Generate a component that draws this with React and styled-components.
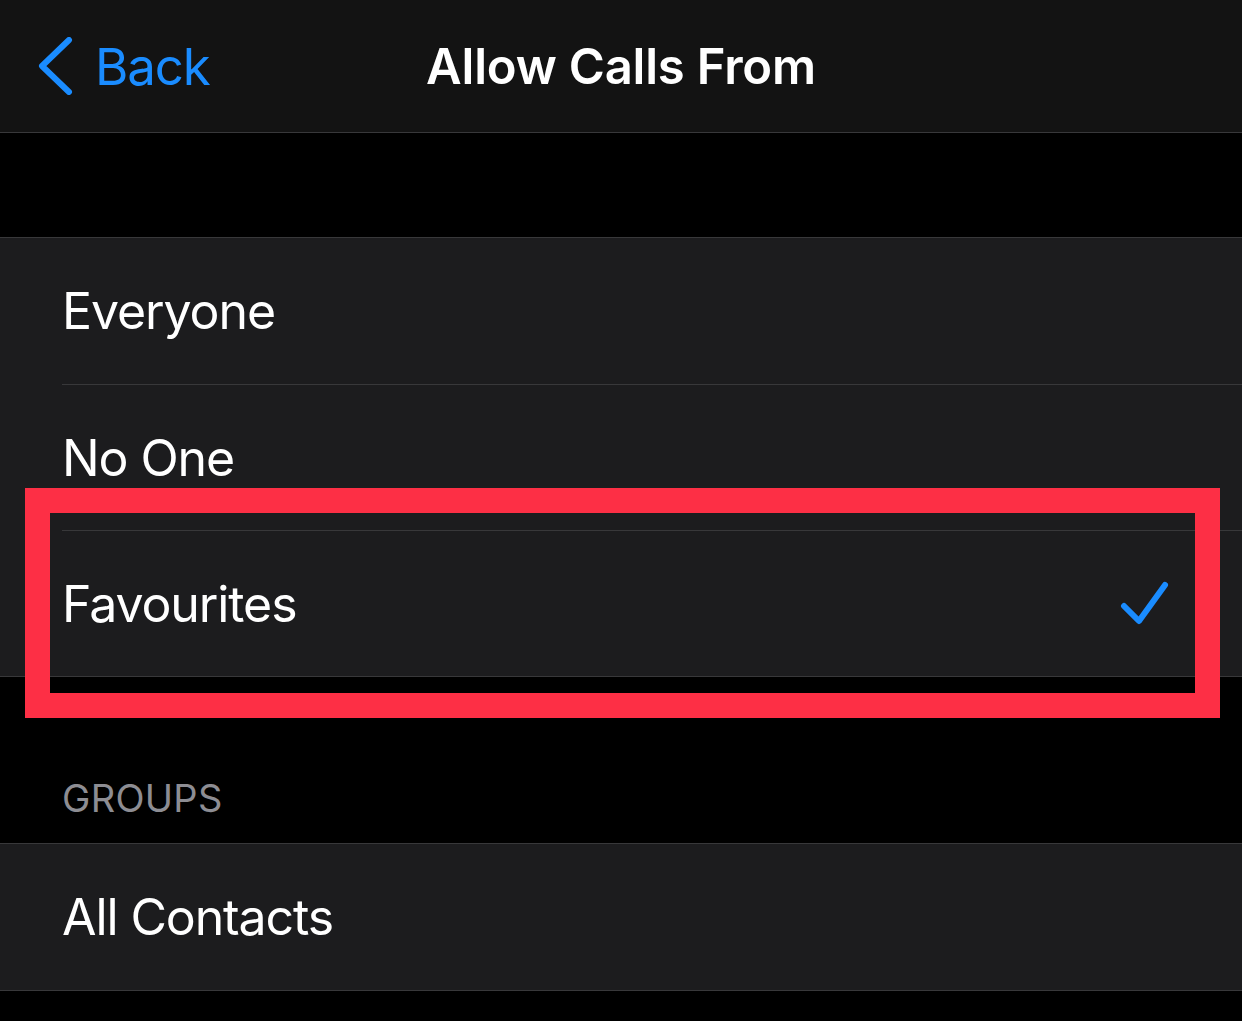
import React from "react";
import styled, { createGlobalStyle } from "styled-components";

const GlobalStyle = createGlobalStyle`
  html, body {
    margin: 0;
    padding: 0;
    background: #000;
  }
  body {
    font-family: Inter, "Noto Sans", "Liberation Sans", sans-serif;
    -webkit-font-smoothing: antialiased;
  }
`;

const Screen = styled.main`
  position: relative;
  width: 1242px;
  height: 1021px;
  background: #000;
  overflow: hidden;
`;

const NavBar = styled.header`
  position: relative;
  display: flex;
  align-items: center;
  justify-content: center;
  height: 132px;
  background: #131313;
  border-bottom: 1px solid #38383a;
`;

const BackButton = styled.div`
  position: absolute;
  left: 37px;
  top: 0;
  bottom: 0;
  display: flex;
  align-items: center;
  gap: 22px;
  color: #1a8cff;
  font-size: 51px;
  letter-spacing: -1.1px;
`;

const Title = styled.h1`
  margin: 0;
  color: #fff;
  font-size: 49px;
  font-weight: 600;
  letter-spacing: -0.2px;
`;

const Spacer = styled.div`
  height: ${props => props.size}px;
`;

const SectionHeader = styled.div`
  display: flex;
  align-items: flex-end;
  height: ${props => props.size}px;
  padding: 0 0 22px 62px;
  box-sizing: border-box;
  color: #8d8d93;
  font-size: 38px;
  letter-spacing: 0.3px;
`;

const Group = styled.section`
  background: #1c1c1e;
  border-top: 1px solid #38383a;
  border-bottom: 1px solid #38383a;
`;

const Row = styled.div`
  display: flex;
  align-items: center;
  justify-content: space-between;
  height: 146px;
  margin-left: 62px;
  padding-right: 72px;
  box-sizing: border-box;
  border-top: ${props => (props.first ? "none" : "1px solid #38383a")};
  color: #fff;
  font-size: 50px;
  letter-spacing: -1.1px;
`;

const Highlight = styled.div`
  position: absolute;
  left: 25px;
  top: 488px;
  width: 1195px;
  height: 230px;
  box-sizing: border-box;
  border: 25px solid #fd2f45;
  pointer-events: none;
`;

const Chevron = () => (
  <svg width="36" height="58" viewBox="0 0 36 58">
    <path
      d="M32 3 L5 29 L32 55"
      fill="none"
      stroke="#1a8cff"
      strokeWidth="6"
      strokeLinecap="round"
      strokeLinejoin="round"
    />
  </svg>
);

const Check = () => (
  <svg width="50" height="50" viewBox="0 0 50 50">
    <path
      d="M4 27 L19 42 L45 6"
      fill="none"
      stroke="#1a8cff"
      strokeWidth="6"
      strokeLinecap="round"
      strokeLinejoin="round"
    />
  </svg>
);

export default function App() {
  return (
    <>
      <GlobalStyle />
      <Screen>
        <NavBar>
          <BackButton>
            <Chevron />
            <span>Back</span>
          </BackButton>
          <Title>Allow Calls From</Title>
        </NavBar>
        <Spacer size={104} />
        <Group>
          <Row first>Everyone</Row>
          <Row>No One</Row>
          <Row>
            Favourites
            <Check />
          </Row>
        </Group>
        <SectionHeader size={166}>GROUPS</SectionHeader>
        <Group>
          <Row first>All Contacts</Row>
        </Group>
        <Highlight />
      </Screen>
    </>
  );
}
